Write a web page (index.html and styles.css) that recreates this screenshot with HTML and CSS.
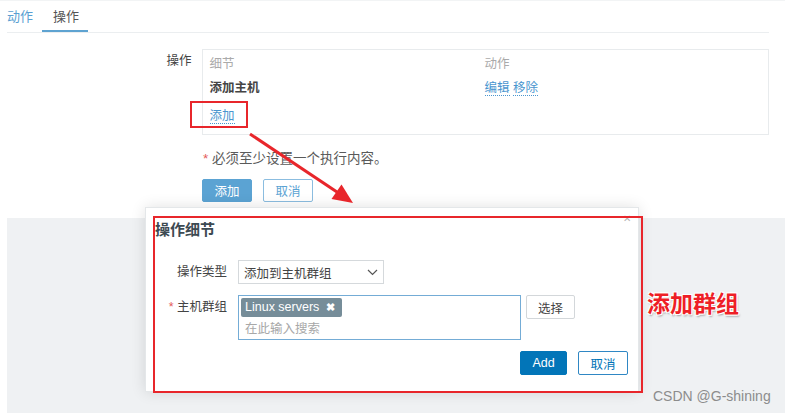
FILE: index.html
```html
<!DOCTYPE html>
<html lang="zh-CN">
<head>
  <meta charset="UTF-8">
  <meta name="viewport" content="width=device-width, initial-scale=1.0">
  <title>操作细节</title>
  <link rel="stylesheet" href="styles.css">
</head>
<body>
  <div class="page">
    <div class="tabs">
      <a class="tab">动作</a>
      <a class="tab active">操作</a>
    </div>

    <div class="form-row">
      <div class="form-label">操作</div>
      <div class="ops-box">
        <div class="ops-grid">
          <span class="col-head">细节</span>
          <span class="col-head">动作</span>
          <span class="op-name">添加主机</span>
          <span><a class="link">编辑</a> <a class="link">移除</a></span>
        </div>
        <div class="ops-add"><a class="link">添加</a></div>
      </div>
    </div>

    <p class="hint"><span class="req">*</span> 必须至少设置一个执行内容。</p>

    <div class="form-buttons">
      <button class="btn-main">添加</button>
      <button class="btn-alt">取消</button>
    </div>
  </div>

  <div class="overlay"></div>

  <div class="dialog">
    <span class="dialog-close">&#x2715;</span>
    <h2 class="dialog-title">操作细节</h2>
    <div class="dlg-row">
      <label class="dlg-label">操作类型</label>
      <div class="select">
        <span>添加到主机群组</span>
        <svg width="11" height="7" viewBox="0 0 11 7"><path d="M1 1 L5.5 5.5 L10 1" fill="none" stroke="#555" stroke-width="1.2"/></svg>
      </div>
    </div>
    <div class="dlg-row">
      <label class="dlg-label"><span class="req">*</span> 主机群组</label>
      <div class="multiselect">
        <span class="chip">Linux servers <b>&#x2716;</b></span>
        <div class="ms-input">在此输入搜索</div>
      </div>
      <button class="btn-select">选择</button>
    </div>
    <div class="dlg-footer">
      <button class="btn-add">Add</button>
      <button class="btn-cancel">取消</button>
    </div>
  </div>

  <!-- annotations -->
  <div class="mark mark-add"></div>
  <div class="mark mark-dialog"></div>
  <svg class="arrow" width="785" height="413">
    <line x1="250" y1="134" x2="337" y2="192" stroke="#e8262b" stroke-width="3"/>
    <polygon points="353,203 331.5,199 341.5,184.5" fill="#e8262b"/>
  </svg>
  <div class="note">添加群组</div>
  <div class="watermark">CSDN @G-shining</div>
</body>
</html>
```

FILE: styles.css
```css
body {
  margin: 0;
  font-family: "Liberation Sans", "Noto Sans CJK SC", sans-serif;
  font-size: 12.5px;
  color: #444;
  background: #fff;
  position: relative;
  height: 413px;
  overflow: hidden;
}
a {
  cursor: pointer;
}
button {
  font-family: inherit;
  font-size: 12.5px;
  cursor: pointer;
  box-sizing: border-box;
}
.req {
  color: #e45959;
}

.page {
  padding: 0 16px 16px 7px;
  border-top: 1px solid #f2f4f5;
}
.tabs {
  display: flex;
  height: 31px;
  border-bottom: 1px solid #ebeef0;
}
.tab {
  font-size: 13px;
  line-height: 28px;
  padding: 2px 9px 0 11px;
  color: #555;
}
.tab:first-child {
  padding-left: 0;
  padding-right: 9px;
  color: #5a9fd2;
}
.tab.active {
  border-bottom: 2px solid #5ea3d1;
  line-height: 27px;
}

.form-row {
  display: flex;
  margin-top: 16px;
}
.form-label {
  width: 185px;
  padding-right: 10px;
  text-align: right;
  line-height: 18px;
  padding-top: 3px;
}
.ops-box {
  border: 1px solid #e8ebed;
  padding: 5px 7px 0;
  width: 553px;
  height: 79px;
}
.ops-grid {
  display: grid;
  grid-template-columns: 275px 1fr;
  row-gap: 6px;
  line-height: 18px;
}
.col-head {
  color: #aaa;
}
.op-name {
  font-weight: bold;
  color: #444;
}
.link {
  color: #4a96cf;
  border-bottom: 1px dotted #4a96cf;
}
.ops-add {
  margin-top: 10px;
  line-height: 18px;
}

.hint {
  margin: 15px 0 0 196px;
  line-height: 18px;
  font-size: 13.5px;
  color: #5a5a5a;
}
.form-buttons {
  display: flex;
  gap: 11px;
  margin: 11px 0 0 195px;
}
.btn-main,
.btn-alt {
  width: 50px;
  height: 23px;
  border-radius: 2px;
}
.btn-main {
  background: #5ba3d3;
  border: 1px solid #5ba3d3;
  color: #fff;
}
.btn-alt {
  background: #fff;
  border: 1px solid #8bbde0;
  color: #5ba3d3;
}

.overlay {
  margin-left: 7px;
  height: 195px;
  background: #eff1f3;
}

.dialog {
  position: absolute;
  left: 145px;
  top: 207px;
  width: 494px;
  height: 185px;
  background: #fff;
  border: 1px solid #e4e7e9;
  box-sizing: border-box;
  box-shadow: 0 0 14px rgba(0, 0, 0, 0.12);
  padding: 13px 10px 0 9px;
}
.dialog-close {
  position: absolute;
  left: 477px;
  top: 5px;
  font-size: 10px;
  color: #b5b5b5;
}
.dialog-title {
  margin: 0 0 21px;
  font-size: 15px;
  line-height: 18px;
  font-weight: bold;
  color: #3d4a52;
}
.dlg-row {
  display: flex;
  align-items: flex-start;
  margin-bottom: 11px;
}
.dlg-label {
  width: 72px;
  padding-right: 11px;
  text-align: right;
  line-height: 24px;
  color: #444;
}
.select {
  width: 146px;
  height: 24px;
  box-sizing: border-box;
  border: 1px solid #d5d9dc;
  display: flex;
  align-items: center;
  justify-content: space-between;
  padding: 0 5px 0 5px;
  color: #444;
}
.multiselect {
  width: 283px;
  height: 45px;
  box-sizing: border-box;
  border: 1px solid #74acd6;
  padding: 2px 2px 0;
}
.chip {
  display: inline-block;
  background: #768d99;
  color: #fff;
  height: 19px;
  line-height: 19px;
  padding: 0 7px 0 4px;
  border-radius: 2px;
  font-size: 12.5px;
}
.chip b {
  margin-left: 3px;
  font-size: 11px;
}
.ms-input {
  padding: 3px 0 0 4px;
  line-height: 18px;
  color: #a8a8a8;
}
.btn-select {
  margin-left: 5px;
  width: 49px;
  height: 24px;
  background: #fff;
  border: 1px solid #d3d7da;
  border-radius: 2px;
  color: #444;
}
.dlg-footer {
  display: flex;
  justify-content: flex-end;
  gap: 11px;
  margin-top: 7px;
}
.btn-add,
.btn-cancel {
  height: 24px;
  border-radius: 2px;
}
.btn-add {
  width: 47px;
  background: #0275b8;
  border: 1px solid #0275b8;
  color: #fff;
}
.btn-cancel {
  width: 50px;
  background: #fff;
  border: 1px solid #2f87c4;
  color: #0275b8;
}

.mark {
  position: absolute;
  border: 2px solid #e8262b;
  box-sizing: border-box;
}
.mark-add {
  left: 190px;
  top: 101px;
  width: 58px;
  height: 27px;
}
.mark-dialog {
  left: 153px;
  top: 216px;
  width: 490px;
  height: 177px;
}
.arrow {
  position: absolute;
  left: 0;
  top: 0;
}
.note {
  position: absolute;
  left: 647px;
  top: 285px;
  font-size: 23px;
  font-weight: bold;
  color: #ee1f26;
  text-shadow: -1px -1px 0 #fff, 1px -1px 0 #fff, -1px 1px 0 #fff, 1px 1px 0 #fff, 1px 2px 2px rgba(0, 0, 0, 0.35);
}
.watermark {
  position: absolute;
  left: 653px;
  top: 388px;
  font-size: 14px;
  color: #8c8c8c;
}
```
